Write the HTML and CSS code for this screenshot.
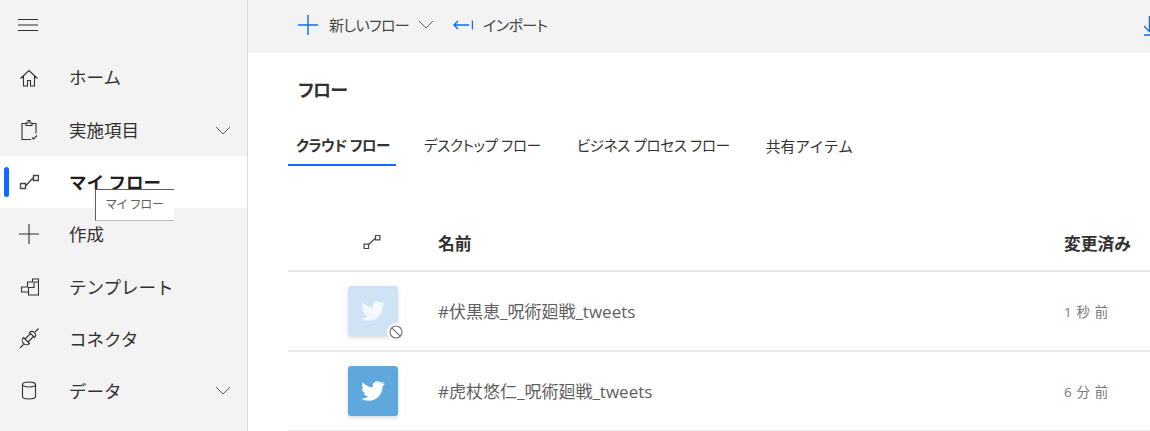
FILE: index.html
```html
<!DOCTYPE html>
<html lang="ja">
<head>
<meta charset="utf-8">
<title>フロー</title>
<link rel="stylesheet" href="styles.css">
</head>
<body>
<div class="app">
  <nav class="side">
    <div class="menu-row">
      <svg class="ic" viewBox="0 0 20 20"><path d="M0 4.500h20M0 10h20M0 15.500h20" class="st-dark"/></svg>
    </div>
    <a class="nav-item up2">
      <span class="nav-ic"><svg class="ic" viewBox="0 0 20 20"><path d="M1.500 10.500 10 2.500l8.500 8M4.500 8v10h4v-5.500h3V18h4V8" class="st-dark"/></svg></span>
      <span class="nav-label">ホーム</span>
    </a>
    <a class="nav-item up1">
      <span class="nav-ic"><svg class="ic" viewBox="0 0 20 20"><path d="M7 3.500H3v16h9M13 3.500h4v10M7 5.500V3h2V.5h2V3h2v2.500zM13 17.500l1.500 1.500 3.500-3.500" class="st-dark"/></svg></span>
      <span class="nav-label">実施項目</span>
      <svg class="chev" viewBox="0 0 16 9"><path d="M1 1l7 7 7-7" class="st-grey"/></svg>
    </a>
    <a class="nav-item active up1">
      <span class="marker"></span>
      <span class="nav-ic"><svg class="ic" viewBox="0 0 20 20"><path d="M1.500 11.500h5v5h-5zM14.500 3.500h5v5h-5zM7 13.500 14 6" class="st-flow"/></svg></span>
      <span class="nav-label">マイ フロー</span>
      <span class="tip">マイ フロー</span>
    </a>
    <a class="nav-item up1">
      <span class="nav-ic"><svg class="ic" viewBox="0 0 20 20"><path d="M0 10h20M10 0v20" class="st-dark"/></svg></span>
      <span class="nav-label">作成</span>
    </a>
    <a class="nav-item">
      <span class="nav-ic"><svg class="ic" viewBox="0 0 20 20"><path d="M2.500 16V11h6V6h5V3h6v16h-10v-3zM9.500 16v-4.500H15V6h4.500" class="st-dark"/></svg></span>
      <span class="nav-label">テンプレート</span>
    </a>
    <a class="nav-item">
      <span class="nav-ic"><svg class="ic" viewBox="0 0 20 20"><path d="M4.500 9.500l6 6A4.240 4.240 0 0 1 4.500 9.500zM10.500 4.500l5 5A3.540 3.540 0 0 0 10.500 4.500zM6 11l5.500-5.500M9 14l5.500-5.500M1 20l3.500-3.500M16 4l3.500-3.500" class="st-dark"/></svg></span>
      <span class="nav-label">コネクタ</span>
    </a>
    <a class="nav-item">
      <span class="nav-ic"><svg class="ic" viewBox="0 0 20 20"><ellipse cx="10" cy="4.500" rx="6.500" ry="2.500" class="st-dark"/><path d="M3.500 4.500v12c0 1.500 3 2.500 6.500 2.500s6.500-1 6.500-2.500v-12" class="st-dark"/></svg></span>
      <span class="nav-label">データ</span>
      <svg class="chev" viewBox="0 0 16 9"><path d="M1 1l7 7 7-7" class="st-grey"/></svg>
    </a>
  </nav>
  <main class="main">
    <div class="cmdbar">
      <span class="cmd">
        <svg class="cmd-ic" viewBox="0 0 20 20"><path d="M0 10h20M10 0v20" class="st-blue"/></svg>
        <span class="cmd-label">新しいフロー</span>
        <svg class="cmd-chev" viewBox="0 0 16 9"><path d="M1 1l7 7 7-7" class="st-grey"/></svg>
      </span>
      <span class="cmd">
        <svg class="cmd-ic narrow" viewBox="0 0 20 20"><path d="M1 10h15M5 6l-4 4 4 4M19.500 5.500v9" class="st-blue"/></svg>
        <span class="cmd-label">インポート</span>
      </span>
      <svg class="dl" viewBox="0 0 12 20"><path d="M5.500 0v15M0 10l5.500 5.500L11 10M0 19h12" class="st-blue"/></svg>
    </div>
    <div class="content">
      <h1 class="title">フロー</h1>
      <div class="tabs">
        <span class="tab on">クラウド フロー</span>
        <span class="tab">デスクトップ フロー</span>
        <span class="tab">ビジネス プロセス フロー</span>
        <span class="tab wide">共有アイテム</span>
      </div>
      <div class="row head">
        <span class="c-ic"><svg class="head-ic" viewBox="0 0 20 16"><path d="M1 10.500h5v5H1zM14 .5h5v5h-5zM6.500 10.500 13.500 4" class="st-flow"/></svg></span>
        <span class="c-name">名前</span>
        <span class="c-date">変更済み</span>
      </div>
      <div class="row item">
        <span class="c-ic">
          <span class="tile off">
            <svg class="bird" viewBox="0 0 24 24"><path d="M23.950 4.570a10 10 0 0 1-2.820.77 4.960 4.960 0 0 0 2.160-2.720c-.95.550-2 .95-3.130 1.180a4.920 4.920 0 0 0-8.380 4.480C7.690 8.090 4.070 6.130 1.640 3.160a4.820 4.820 0 0 0-.66 2.470c0 1.710.87 3.210 2.190 4.100a4.900 4.900 0 0 1-2.230-.62v.06a4.920 4.920 0 0 0 3.950 4.820 5 5 0 0 1-2.210.08 4.940 4.940 0 0 0 4.600 3.420A9.870 9.870 0 0 1 0 19.540a14 14 0 0 0 7.560 2.210c9.050 0 14-7.500 14-13.980 0-.21 0-.42-.02-.63a9.940 9.940 0 0 0 2.460-2.550z"/></svg>
            <span class="badge"><svg viewBox="0 0 14 14"><circle cx="7" cy="7" r="6" class="st-badge"/><path d="M2.800 2.800l8.400 8.400" class="st-badge"/></svg></span>
          </span>
        </span>
        <span class="c-name">#伏黒恵_呪術廻戦_tweets</span>
        <span class="c-date small">1 秒 前</span>
      </div>
      <div class="row item">
        <span class="c-ic">
          <span class="tile">
            <svg class="bird" viewBox="0 0 24 24"><path d="M23.950 4.570a10 10 0 0 1-2.820.77 4.960 4.960 0 0 0 2.160-2.720c-.95.550-2 .95-3.130 1.180a4.920 4.920 0 0 0-8.380 4.480C7.690 8.090 4.070 6.130 1.640 3.160a4.820 4.820 0 0 0-.66 2.470c0 1.710.87 3.210 2.190 4.100a4.900 4.900 0 0 1-2.230-.62v.06a4.920 4.920 0 0 0 3.950 4.820 5 5 0 0 1-2.210.08 4.940 4.940 0 0 0 4.600 3.420A9.870 9.870 0 0 1 0 19.540a14 14 0 0 0 7.560 2.210c9.050 0 14-7.500 14-13.980 0-.21 0-.42-.02-.63a9.940 9.940 0 0 0 2.460-2.550z"/></svg>
          </span>
        </span>
        <span class="c-name">#虎杖悠仁_呪術廻戦_tweets</span>
        <span class="c-date small">6 分 前</span>
      </div>
    </div>
  </main>
</div>
</body>
</html>
```
FILE: styles.css
```css
* { box-sizing: border-box; }
html, body { margin: 0; height: 100%; overflow: hidden; }
body {
  font-family: "Open Sans", "Noto Sans CJK JP", sans-serif;
  color: #323130;
  background: #fff;
}
.app { display: flex; height: 431px; width: 1150px; }

.st-dark { fill: none; stroke: #323130; stroke-width: 1.1; }
.st-flow { fill: none; stroke: #484644; stroke-width: 1.4; }
.st-grey { fill: none; stroke: #605e5c; stroke-width: 1; }
.st-blue { fill: none; stroke: #0f6cf0; stroke-width: 1.4; }
.st-badge { fill: none; stroke: #777; stroke-width: 1.2; }

.side {
  width: 248px;
  flex: none;
  background: #f3f3f3;
  border-right: 1px solid #dcdcdc;
}
.menu-row {
  height: 52px;
  display: flex;
  align-items: center;
  padding: 0 0 3px 18px;
}
.nav-item {
  position: relative;
  height: 52px;
  display: flex;
  align-items: center;
  font-size: 17.5px;
  color: #323130;
}
.nav-ic { width: 69px; padding-left: 19px; display: flex; align-items: center; flex: none; }
.ic { width: 20px; height: 20px; display: block; }
.nav-label { flex: 1; }
.chev { width: 16px; height: 9px; margin-right: 16px; }
.active { background: #fff; }
.active .nav-label { font-weight: 700; color: #201f1e; }
.up2 .nav-label { padding-bottom: 4px; }
.up1 .nav-label { padding-bottom: 2px; }
.marker {
  position: absolute;
  left: 4px;
  top: 11px;
  width: 5px;
  height: 30px;
  border-radius: 3px;
  background: #0f6cff;
}
.tip {
  position: absolute;
  left: 95px;
  top: 33px;
  width: 79px;
  height: 32px;
  background: #fff;
  border-left: 1px solid #605e5c;
  border-top: 1px solid #605e5c;
  border-bottom: 1px solid #bbb;
  font-size: 12px;
  font-feature-settings: "palt";
  font-weight: 400;
  color: #605e5c;
  padding-left: 10px;
  line-height: 29px;
  z-index: 2;
}

.main { flex: 1; min-width: 0; }
.cmdbar {
  height: 53px;
  background: #f3f3f3;
  display: flex;
  align-items: center;
  padding: 0 0 4px 50px;
  position: relative;
  overflow: hidden;
}
.cmd { display: flex; align-items: center; font-size: 15px; font-feature-settings: "palt"; letter-spacing: -0.6px; color: #484644; margin-right: 19px; }
.cmd-ic { width: 20px; height: 20px; margin-right: 11px; }
.cmd-ic.narrow { margin-right: 10px; }
.cmd-chev { width: 16px; height: 9px; margin-left: 9px; }
.dl { position: absolute; left: 896px; top: 16px; width: 12px; height: 20px; }

.content { padding: 0 0 0 40px; }
.title { margin: 0; font-size: 18px; font-weight: 700; padding: 21px 0 0 10px; line-height: 32px; box-sizing: content-box; height: 32px; color: #323130; font-feature-settings: "palt"; letter-spacing: -0.8px; }
.tabs { display: flex; margin-top: 28px; margin-bottom: 50px; }
.tab {
  font-size: 14.5px;
  font-feature-settings: "palt";
  letter-spacing: -0.3px;
  line-height: 24px;
  height: 32px;
  padding: 0 8px;
  margin-right: 20px;
  color: #323130;
}
.tab.on { font-weight: 700; border-bottom: 2px solid #0f6cff; letter-spacing: -0.55px; width: 108px; white-space: nowrap; }
.tab.wide { font-feature-settings: normal; font-size: 14.8px; letter-spacing: 0; }

.row { display: flex; align-items: center; width: 870px; }
.head { height: 56px; border-bottom: 2px solid #e6e6e6; font-size: 16.800px; font-weight: 700; color: #323130; }
.item { height: 80px; border-bottom: 2px solid #eaeaea; font-size: 17px; color: #605e5c; }
.item .c-name { padding-bottom: 2px; }
.c-ic { width: 150px; padding-left: 60px; display: flex; flex: none; }
.c-name { width: 626px; flex: none; }
.c-date { flex: 1; white-space: nowrap; }
.small { font-size: 13.500px; color: #777; letter-spacing: 0.6px; }
.head-ic { width: 18px; height: 14px; margin-left: 15px; margin-top: -2px; }
.tile {
  position: relative;
  width: 50px;
  height: 50px;
  border-radius: 3px;
  background: #5ea8de;
  box-shadow: 0 2px 4px rgba(0,0,0,.14);
  display: flex;
  align-items: center;
  justify-content: center;
}
.tile.off { background: #cfe3f4; }
.bird { width: 24px; height: 24px; fill: #fff; }
.off .bird { fill: #f4f9fd; }
.badge {
  position: absolute;
  right: -7px;
  bottom: -5px;
  width: 18px;
  height: 18px;
  border-radius: 50%;
  background: #fff;
  padding: 2px;
  display: flex;
}
.badge svg { width: 14px; height: 14px; }
```
